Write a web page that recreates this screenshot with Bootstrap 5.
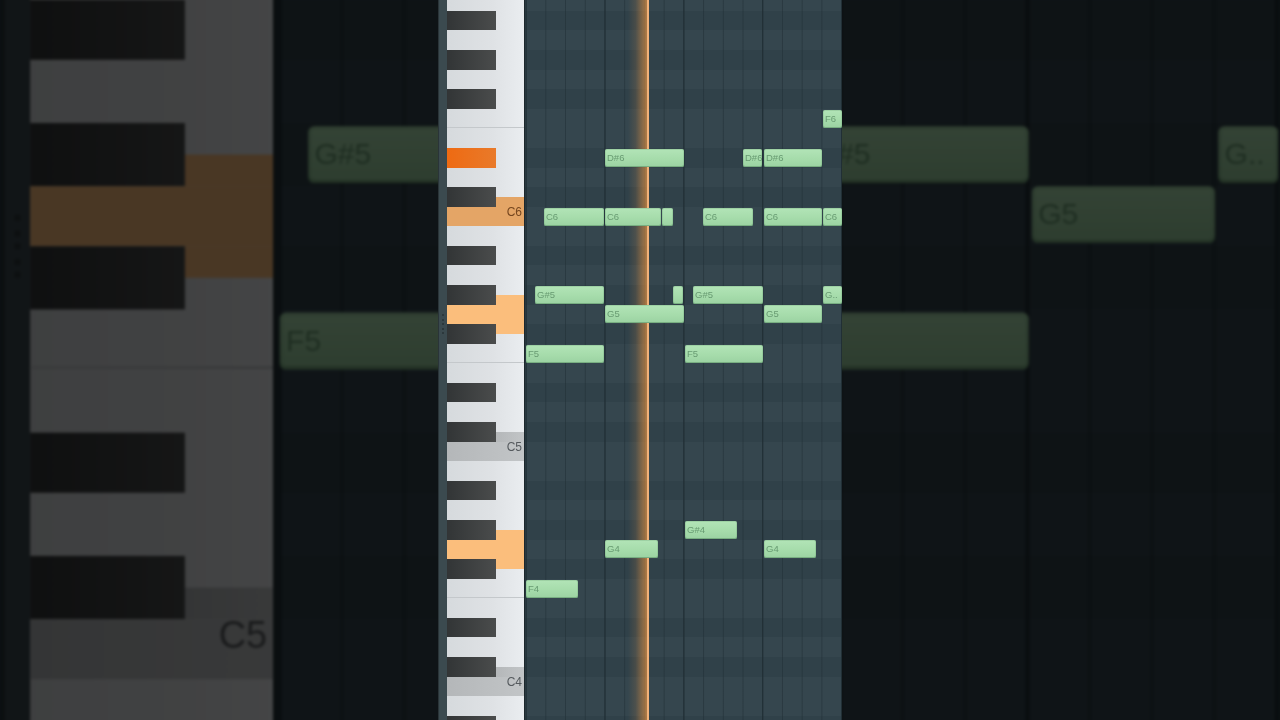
<!DOCTYPE html>
<html lang="en">
<head>
    <meta charset="UTF-8">
    <meta name="viewport" content="width=device-width, initial-scale=1.0">
    <title>Piano Roll</title>
    <link href="https://cdn.jsdelivr.net/npm/bootstrap@5.3.2/dist/css/bootstrap.min.css" rel="stylesheet">
    <style>
        body {
            background: #0b1012;
            font-family: "Liberation Sans", Arial, sans-serif;
        }
        .stage {
            width: 1280px;
            height: 720px;
        }
        /* the same roll, zoomed and dimmed behind the video column */
        .backdrop {
            position: absolute;
            left: 438px;
            top: 0;
            transform-origin: 202px 360px;
            transform: scale(3.16);
            filter: brightness(.29) blur(.5px);
        }
        .roll {
            width: 404px;
            height: 720px;
        }
        .front {
            position: relative;
            filter: blur(.4px);
        }
        .side-strip {
            width: 9px;
            gap: 2.5px;
            padding-bottom: 72px;
            background: #3b4a4f;
            border-left: 1px solid #2a3438;
        }
        .grip {
            width: 2px;
            height: 2px;
            background: #2c383c;
        }
        .keys {
            width: 77px;
            margin-top: -28.26px;
            background: linear-gradient(90deg, #d6dadd, #dfe2e5 60%, #eaedf0);
        }
        .key-row {
            height: 19.58px;
            flex: none;
            position: relative;
        }
        .key-black {
            width: 49px;
            background: linear-gradient(90deg, #323536, #4a4c4c);
        }
        .key-rest {
            width: 28px;
        }
        .tint-half {
            height: 50%;
        }
        .key-edge {
            box-shadow: inset 0 -1px 0 #c4c8cb;
        }
        .key-label {
            position: absolute;
            right: 2px;
            top: -2px;
            font-size: 12px;
            line-height: 14px;
            color: #555a5e;
        }
        .tint-root { background: #e4a566; }
        .tint-root .key-label { color: #75461f; }
        .tint-peach { background: #fbbe7c; }
        .tint-grey { background: linear-gradient(90deg, #b4b7b9, #c2c5c7); }
        .tint-hot { background: linear-gradient(90deg, #ee6a12, #e97a2a); }
        .grid-pane {
            width: 318px;
            position: relative;
            overflow: hidden;
            background: #34454d;
            border-left: 1px solid #1d282d;
        }
        .grid-rows {
            margin-top: -28.26px;
        }
        .grid-row {
            height: 19.58px;
            flex: none;
            background: #35464e;
        }
        .grid-row-dark {
            background: #304149;
        }
        .beat-lines {
            position: absolute;
            inset: 0;
            background-image:
                linear-gradient(90deg, transparent calc(100% - 1.2px), #1f2d33 calc(100% - 1.2px)),
                linear-gradient(90deg, transparent calc(100% - 1.2px), rgba(32, 46, 53, .55) calc(100% - 1.2px));
            background-size: 78.9px 100%, 19.725px 100%;
            background-position: 1.6px 0, 1.6px 0;
        }
        .playhead-glow {
            position: absolute;
            top: 0;
            bottom: 0;
            left: 103px;
            width: 19px;
            background: linear-gradient(90deg, rgba(226, 145, 66, 0), rgba(226, 145, 66, .14) 40%, rgba(226, 145, 66, .7));
        }
        .playhead-line {
            position: absolute;
            top: 0;
            bottom: 0;
            left: 122px;
            width: 2px;
            background: #f2b27a;
        }
        .pnote {
            position: absolute;
            height: 18px;
            border-radius: 2px;
            background: linear-gradient(180deg, #b2e4b7, #a6dcab 55%, #9bd2a2);
            box-shadow: inset 0 0 0 1px rgba(120, 175, 130, .35), inset 0 -1px 0 rgba(96, 150, 108, .6);
            color: #689b72;
            font-size: 9.5px;
            line-height: 18px;
            padding-left: 2px;
            white-space: nowrap;
            overflow: hidden;
        }
    </style>
</head>
<body>
    <div class="stage position-relative overflow-hidden">
        <div class="backdrop roll d-flex" id="back-roll"></div>
        <div class="front roll d-flex mx-auto" id="front-roll"></div>
    </div>

<script src="https://cdn.jsdelivr.net/npm/bootstrap@5.3.2/dist/js/bootstrap.bundle.min.js"></script>
<script>
    // semitones counted from C6, row 12 is the one cut off at the top
    const TOP = 12, BOTTOM = -27;
    const BLACK = [1, 3, 6, 8, 10];
    const NAMES = { 0: 'C6', '-12': 'C5', '-24': 'C4' };

    // [label, semitone, left, right] in grid pixels
    const NOTES = [
        ['F6', 5, 298, 317],
        ['D#6', 3, 80, 159], ['D#6', 3, 218, 237], ['D#6', 3, 239, 297],
        ['C6', 0, 19, 79], ['C6', 0, 80, 136], ['', 0, 137, 148], ['C6', 0, 178, 228], ['C6', 0, 239, 297], ['C6', 0, 298, 317],
        ['G#5', -4, 10, 79], ['', -4, 148, 158], ['G#5', -4, 168, 238], ['G..', -4, 298, 317],
        ['G5', -5, 80, 159], ['G5', -5, 239, 297],
        ['F5', -7, 1, 79], ['F5', -7, 160, 238],
        ['G#4', -16, 160, 212],
        ['G4', -17, 80, 133], ['G4', -17, 239, 291],
        ['F4', -19, 1, 53]
    ];

    const TINTS = { 0: 'tint-root', '-5': 'tint-peach', '-17': 'tint-peach', '-12': 'tint-grey', '-24': 'tint-grey' };

    function isBlack(n) {
        return BLACK.includes(((n % 12) + 12) % 12);
    }

    function keyRow(n) {
        const row = document.createElement('div');
        row.className = 'key-row d-flex';
        if (isBlack(n)) {
            const hot = n === 3 ? ' tint-hot' : '';
            row.innerHTML = `<div class="key-black${hot}"></div>
                <div class="key-rest d-flex flex-column">
                    <div class="tint-half ${TINTS[n + 1] || ''}"></div>
                    <div class="tint-half ${TINTS[n - 1] || ''}"></div>
                </div>`;
        } else {
            if (TINTS[n]) row.classList.add(TINTS[n]);
            if (((n % 12) + 12) % 12 === 5) row.classList.add('key-edge');
            if (NAMES[n]) row.innerHTML = `<span class="key-label">${NAMES[n]}</span>`;
        }
        return row;
    }

    function buildRoll(root) {
        const strip = document.createElement('div');
        strip.className = 'side-strip flex-shrink-0 d-flex flex-column align-items-center justify-content-center';
        for (let i = 0; i < 5; i++) {
            const g = document.createElement('div');
            g.className = 'grip';
            strip.appendChild(g);
        }
        root.appendChild(strip);

        const keys = document.createElement('div');
        keys.className = 'keys d-flex flex-column flex-shrink-0';
        const gridRows = document.createElement('div');
        gridRows.className = 'grid-rows d-flex flex-column';
        for (let n = TOP; n >= BOTTOM; n--) {
            keys.appendChild(keyRow(n));
            const r = document.createElement('div');
            r.className = 'grid-row' + (isBlack(n) ? ' grid-row-dark' : '');
            gridRows.appendChild(r);
        }
        root.appendChild(keys);

        const grid = document.createElement('div');
        grid.className = 'grid-pane flex-shrink-0';
        grid.appendChild(gridRows);
        grid.insertAdjacentHTML('beforeend', '<div class="beat-lines"></div><div class="playhead-glow"></div><div class="playhead-line"></div>');
        NOTES.forEach(([label, n, x1, x2]) => {
            const el = document.createElement('div');
            el.className = 'pnote';
            el.textContent = label;
            el.style.left = x1 + 'px';
            el.style.width = (x2 - x1) + 'px';
            el.style.top = (216.5 - n * 19.58 - 9) + 'px';
            grid.appendChild(el);
        });
        root.appendChild(grid);
    }

    buildRoll(document.getElementById('back-roll'));
    buildRoll(document.getElementById('front-roll'));
</script>
</body>
</html>
